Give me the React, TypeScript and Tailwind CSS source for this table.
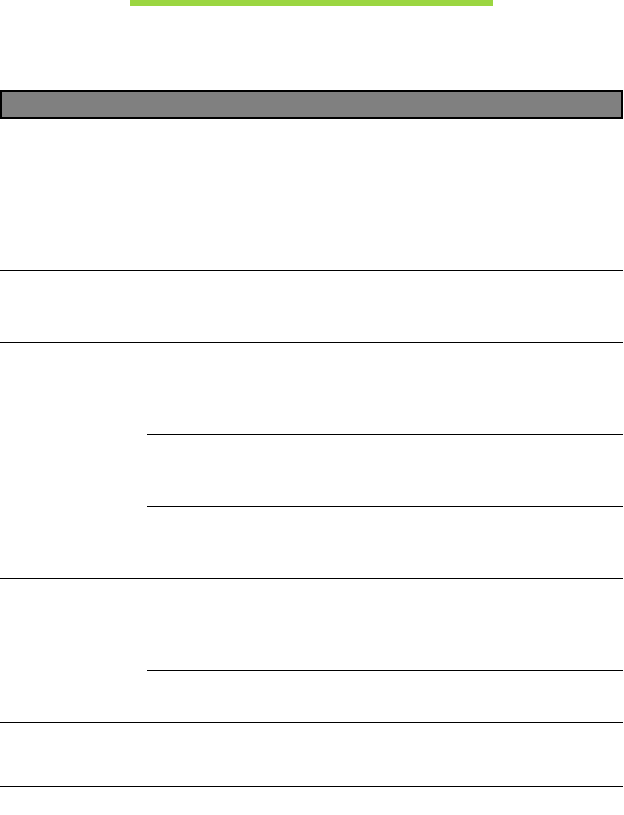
export default function App() {
  return (
    <div className="w-[624px] min-h-[815px] bg-white">
      <div className="ml-[130px] w-[363px] h-[6px] bg-[#9bd641]" />

      <div className="w-[623px] mt-[84px]">
        <div className="h-[29px] border-2 border-black bg-[#808080]" />

        <div className="h-[152px] border-b border-black" />

        <div className="h-[72px] border-b border-black" />

        <div className="grid grid-cols-[147px_1fr] border-b border-black">
          <div />
          <div className="flex flex-col divide-y divide-black">
            <div className="h-[92px]" />
            <div className="h-[72px]" />
            <div className="h-[71px]" />
          </div>
        </div>

        <div className="grid grid-cols-[147px_1fr] border-b border-black">
          <div />
          <div className="flex flex-col divide-y divide-black">
            <div className="h-[92px]" />
            <div className="h-[51px]" />
          </div>
        </div>

        <div className="h-[64px] border-b border-black" />
      </div>
    </div>
  );
}
